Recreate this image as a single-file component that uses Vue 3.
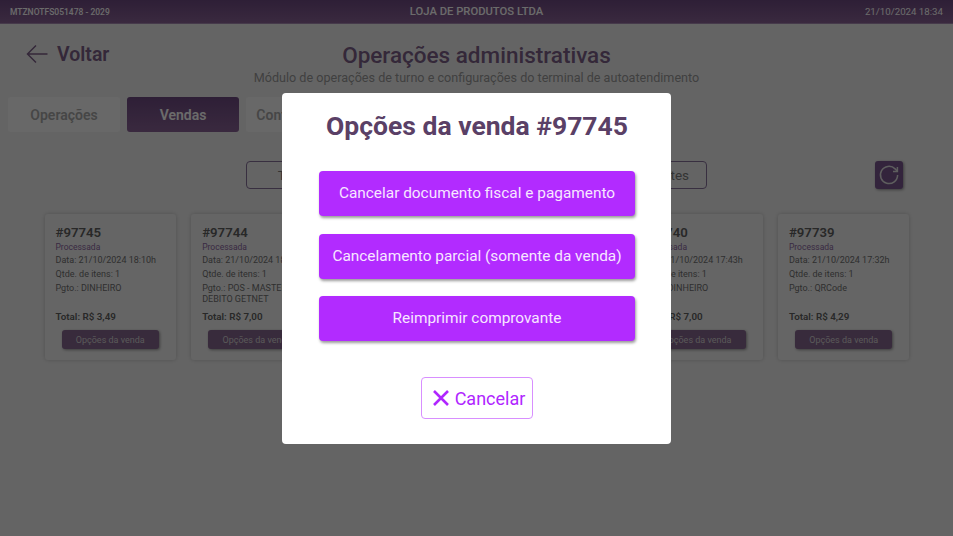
<script setup>
const tabs = [
  { label: 'Operações', active: false },
  { label: 'Vendas', active: true },
  { label: 'Configurações', active: false },
]
const filters = ['Todas vendas', 'Processadas', 'Vendas pendentes']
const sales = [
  { id: 97745, date: '21/10/2024 18:10h', pay: 'DINHEIRO', total: '3,49' },
  { id: 97744, date: '21/10/2024 18:02h', pay: 'POS - MASTERCARD DEBITO GETNET', total: '7,00' },
  { id: 97743, date: '21/10/2024 17:58h', pay: 'DINHEIRO', total: '4,29' },
  { id: 97741, date: '21/10/2024 17:50h', pay: 'DINHEIRO', total: '3,49' },
  { id: 97740, date: '21/10/2024 17:43h', pay: 'DINHEIRO', total: '7,00' },
  { id: 97739, date: '21/10/2024 17:32h', pay: 'QRCode', total: '4,29' },
]
const actions = [
  'Cancelar documento fiscal e pagamento',
  'Cancelamento parcial (somente da venda)',
  'Reimprimir comprovante',
]
</script>

<template>
  <div class="page">
    <header class="topbar">
      <span>MTZNOTFS051478 - 2029</span>
      <span class="store">LOJA DE PRODUTOS LTDA</span>
      <span class="clock">21/10/2024 18:34</span>
    </header>

    <section class="head">
      <a class="back">
        <svg width="22" height="20" viewBox="0 0 22 20" fill="none" stroke="currentColor" stroke-width="1.5">
          <path d="M21.5 10H1.5M10 1.5L1.5 10L10 18.5" />
        </svg>
        Voltar
      </a>
      <div class="titles">
        <h1>Operações administrativas</h1>
        <p>Módulo de operações de turno e configurações do terminal de autoatendimento</p>
      </div>
    </section>

    <nav class="tabs">
      <button v-for="t in tabs" :key="t.label" class="tab" :class="{ on: t.active }">{{ t.label }}</button>
    </nav>

    <div class="filters">
      <div class="filter-group">
        <button v-for="f in filters" :key="f" class="filter">{{ f }}</button>
      </div>
      <button class="refresh">
        <svg width="26" height="26" viewBox="0 0 26 26" fill="none" stroke="currentColor" stroke-width="1.5">
          <path d="M21.6 13a8.6 8.6 0 1 1-2.5-6.1L21.2 9" />
          <path d="M21.4 5V9.4H17" />
        </svg>
      </button>
    </div>

    <div class="cards">
      <article v-for="s in sales" :key="s.id" class="card">
        <h2>#{{ s.id }}</h2>
        <div class="status">Processada</div>
        <div class="row">Data: {{ s.date }}</div>
        <div class="row">Qtde. de itens: 1</div>
        <div class="row pay">Pgto.: {{ s.pay }}</div>
        <div class="total">Total: R$ {{ s.total }}</div>
        <button class="opts">Opções da venda</button>
      </article>
    </div>

    <div class="overlay">
      <div class="modal">
        <h2 class="modal-title">Opções da venda #97745</h2>
        <div class="actions">
          <button v-for="a in actions" :key="a" class="action">{{ a }}</button>
        </div>
        <button class="cancel">
          <svg width="18" height="18" viewBox="0 0 18 18" fill="none" stroke="currentColor" stroke-width="2.6">
            <path d="M2 2L16 16M16 2L2 16" />
          </svg>
          Cancelar
        </button>
      </div>
    </div>
  </div>
</template>

<style>
html, body { margin: 0; background: #fff; }
</style>

<style scoped>
.page {
  position: relative;
  width: 953px;
  height: 536px;
  overflow: hidden;
  background: #efefef;
  font-family: Roboto, "Liberation Sans", sans-serif;
  color: #555;
}
button { font-family: inherit; cursor: pointer; }
.topbar {
  height: 24px;
  box-sizing: border-box;
  display: grid;
  grid-template-columns: 1fr auto 1fr;
  align-items: center;
  padding: 0 10px;
  background: linear-gradient(#6e4a82, #8a6396);
  border-bottom: 1px solid #a68ab2;
  color: #fff;
  font-size: 8.5px;
  font-weight: 500;
}
.store { font-size: 11.25px; }
.clock { text-align: right; font-size: 9.7px; font-weight: 400; }
.head {
  display: grid;
  grid-template-columns: 1fr auto 1fr;
  padding: 18px 0 0 26px;
  height: 48px;
}
.back {
  display: flex;
  align-items: center;
  align-self: start;
  gap: 9px;
  height: 24px;
  color: #7d5f88;
  font-size: 19.5px;
  font-weight: 600;
}
.titles { text-align: center; margin-left: -26px; }
.titles h1 { margin: 0; font-size: 22.5px; line-height: 26px; font-weight: 500; color: #7d5f88; }
.titles p { margin: 2px 0 0; font-size: 12.6px; line-height: 16px; color: #999; }
.tabs { display: flex; gap: 7px; padding: 7px 8px 0; }
.tab {
  width: 112px;
  height: 35px;
  border: 0;
  border-radius: 3px;
  background: #f8f8f8;
  color: #a8a8a8;
  font-size: 14px;
  font-weight: 600;
  padding: 0;
  white-space: nowrap;
}
.tab.on { background: linear-gradient(#6e4a82, #8a6396); color: #fff; }
.filters {
  display: grid;
  grid-template-columns: 1fr auto 1fr;
  padding: 29px 50px 0 0;
  margin-left: 50px;
}
.filter-group { grid-column: 2; display: flex; gap: 10px; }
.filter {
  width: 147px;
  height: 28px;
  box-sizing: border-box;
  border: 1px solid #85709a;
  border-radius: 4px;
  background: #efefef;
  color: #7c7c7c;
  font-size: 13.5px;
  padding: 0;
}
.refresh {
  grid-column: 3;
  justify-self: end;
  width: 28px;
  height: 28px;
  padding: 0;
  display: grid;
  place-items: center;
  border: 0;
  border-radius: 3px;
  background: #7a5790;
  color: #e0e0e0;
  box-shadow: 1px 1px 3px rgba(0, 0, 0, .4);
}
.cards {
  display: flex;
  justify-content: space-between;
  padding: 25px 43.5px 0 44.5px;
}
.card {
  width: 131.5px;
  height: 145.5px;
  box-sizing: border-box;
  padding: 11px 11px 10.5px;
  display: flex;
  flex-direction: column;
  border-radius: 3px;
  background: #f1f1f1;
  box-shadow: 0 0 4px rgba(0, 0, 0, .2);
  font-size: 9px;
  line-height: 11px;
  color: #707070;
}
.card h2 { margin: 0; font-size: 13.2px; line-height: 16px; font-weight: 600; color: #606060; }
.status { font-size: 8.5px; color: #8a66a0; margin-top: 1px; margin-bottom: 1.5px; }
.row { margin-bottom: 3px; }
.pay { height: 22px; }
.total { margin-top: auto; font-size: 9.8px; font-weight: 600; color: #606060; margin-bottom: 8px; }
.opts {
  align-self: center;
  width: 97px;
  height: 19px;
  padding: 0;
  border: 0;
  border-radius: 3px;
  background: #87668f;
  color: #d4d4d4;
  font-size: 9px;
  box-shadow: 1px 1px 3px rgba(0, 0, 0, .4);
}
.overlay {
  position: absolute;
  inset: 0;
  display: flex;
  align-items: flex-start;
  justify-content: center;
  background: rgba(0, 0, 0, .58);
  backdrop-filter: blur(.6px);
}
.modal {
  width: 389px;
  height: 351px;
  margin-top: 93px;
  box-sizing: border-box;
  padding: 17px 36px 0 37px;
  display: flex;
  flex-direction: column;
  align-items: center;
  border-radius: 4px;
  background: #fff;
}
.modal-title { margin: 0; font-size: 26.5px; line-height: 32px; font-weight: 700; color: #5a4066; white-space: nowrap; }
.actions { display: flex; flex-direction: column; gap: 17.5px; width: 100%; margin-top: 29px; }
.action {
  height: 45px;
  border: 0;
  border-radius: 4px;
  background: #b22bff;
  color: #f7e6ff;
  font-size: 15.4px;
  padding: 0 0 1px;
  box-shadow: 1px 2px 3px rgba(0, 0, 0, .4);
}
.cancel {
  display: flex;
  align-items: center;
  justify-content: center;
  gap: 5px;
  width: 112px;
  height: 42px;
  margin-top: 36px;
  padding: 0 0 0 3px;
  box-sizing: border-box;
  border: 1px solid #d88fff;
  border-radius: 4px;
  background: #fff;
  color: #b026ff;
  font-size: 18px;
}
</style>
